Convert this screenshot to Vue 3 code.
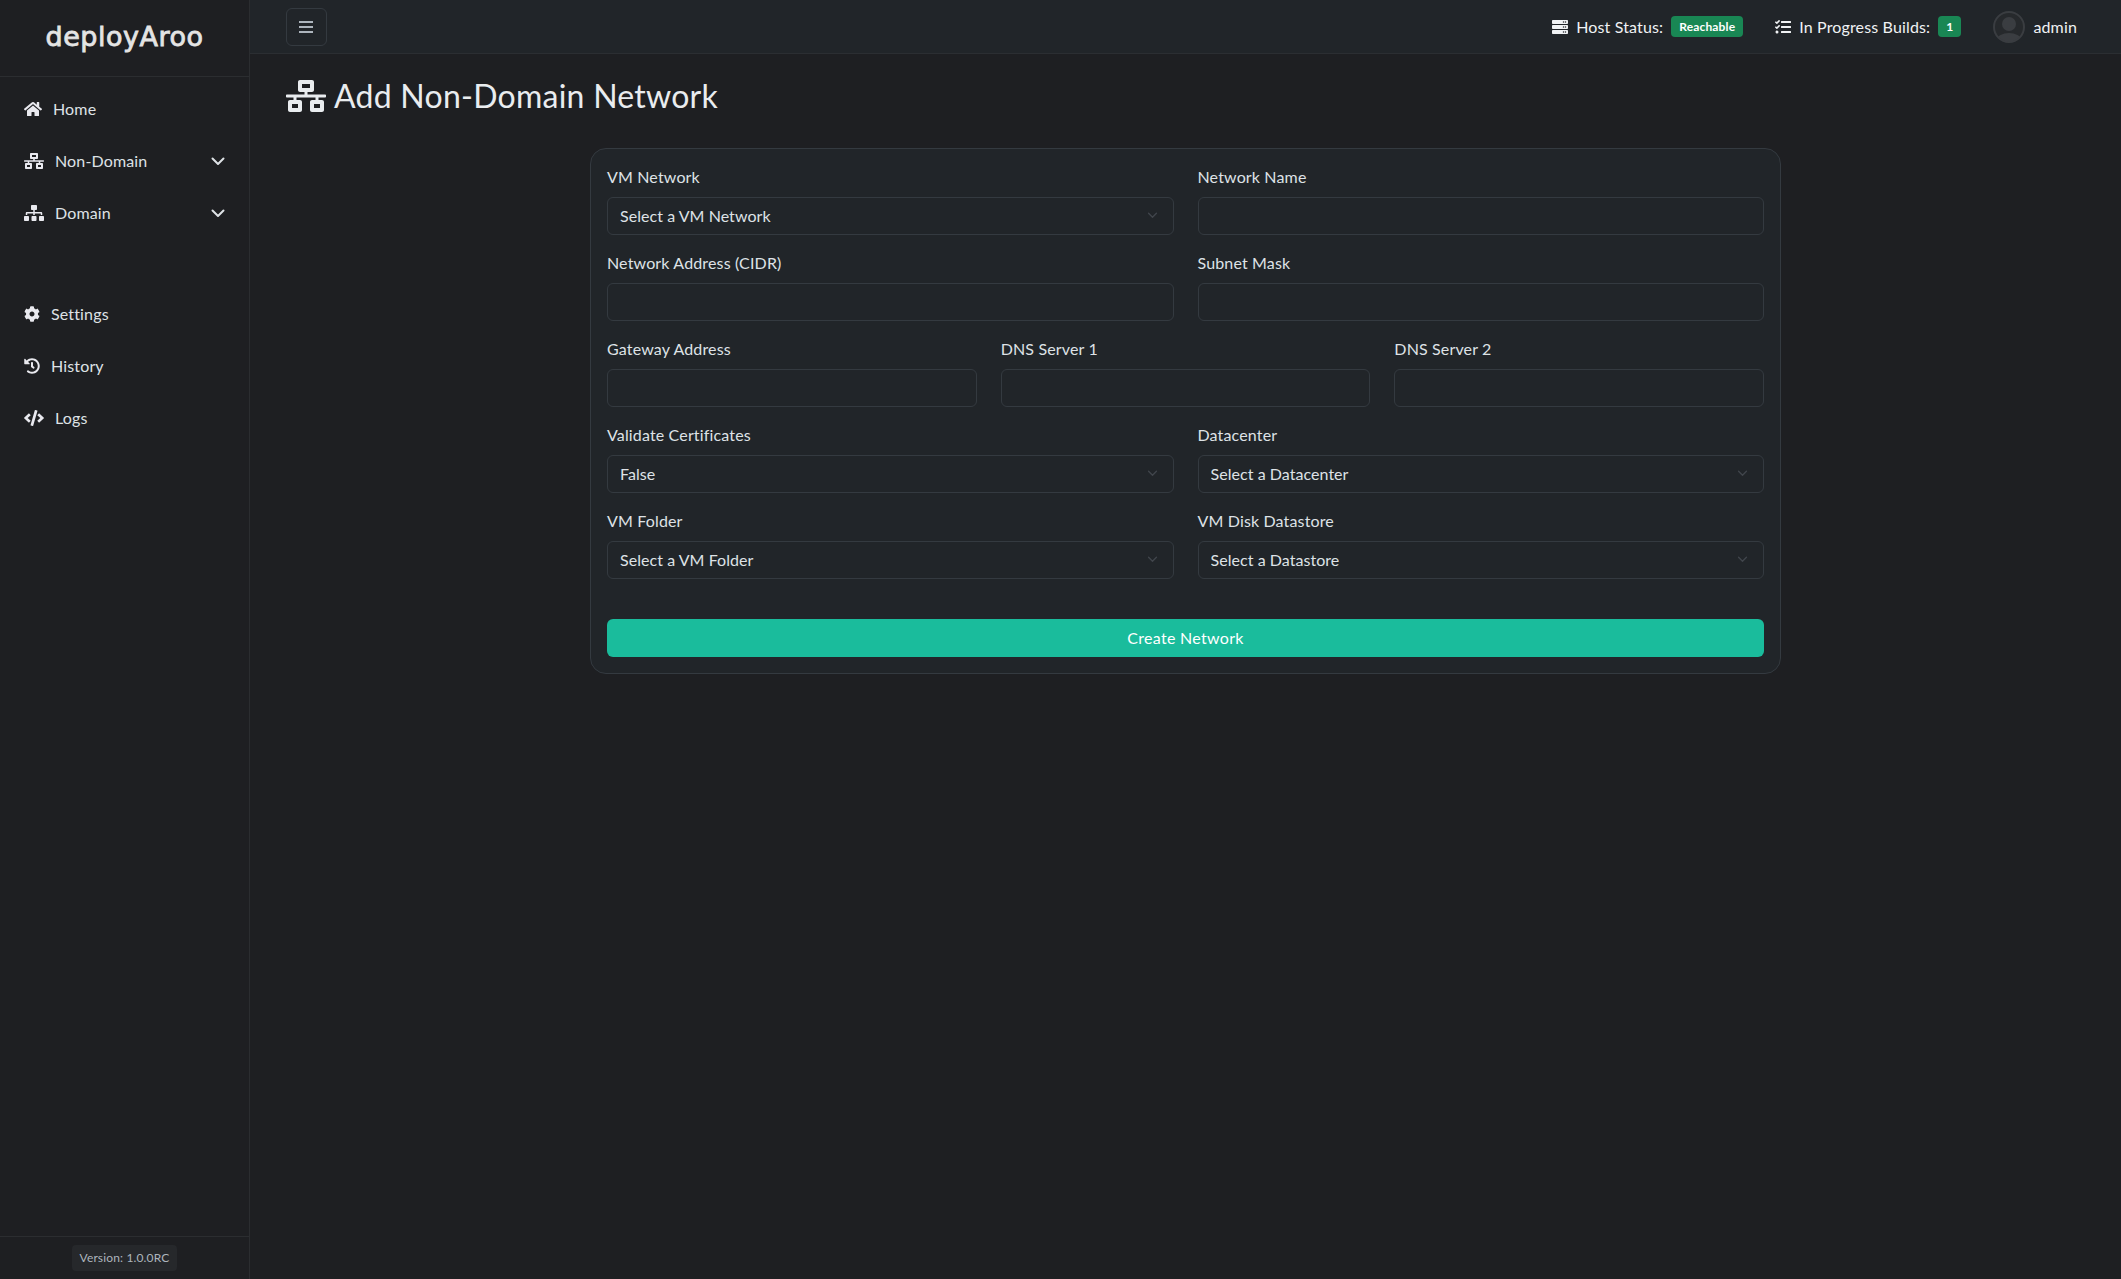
<template>
  <div class="layout">
    <aside class="sidebar">
      <div class="logo">deployAroo</div>
      <nav class="nav">
        <a v-for="item in topNav" :key="item.label" class="nav-item" href="#">
          <svg class="nav-icon" :viewBox="icons[item.icon].box" :width="icons[item.icon].w" height="16" fill="currentColor"><path :d="icons[item.icon].d" /></svg>
          <span>{{ item.label }}</span>
          <svg v-if="item.sub" class="nav-chevron" viewBox="0 0 14 9" width="14" height="9" fill="none" stroke="currentColor" stroke-width="2" stroke-linecap="round" stroke-linejoin="round"><path d="M1.5 1.5 7 7l5.5-5.5" /></svg>
        </a>
        <div class="nav-gap"></div>
        <a v-for="item in bottomNav" :key="item.label" class="nav-item" href="#">
          <svg class="nav-icon" :viewBox="icons[item.icon].box" :width="icons[item.icon].w" height="16" fill="currentColor"><path :d="icons[item.icon].d" /></svg>
          <span>{{ item.label }}</span>
        </a>
      </nav>
      <div class="side-foot">
        <span class="version">Version: 1.0.0RC</span>
      </div>
    </aside>

    <div class="content">
      <header class="topbar">
        <button class="menu-btn" type="button">
          <svg viewBox="0 0 14 12" width="14" height="12" fill="none" stroke="currentColor" stroke-width="2"><path d="M0 1h14M0 6h14M0 11h14" /></svg>
        </button>
        <div class="status">
          <svg class="status-icon" :viewBox="icons.server.box" width="16" height="16" fill="currentColor"><path :d="icons.server.d" /></svg>
          <span>Host Status:</span>
          <span class="badge">Reachable</span>
        </div>
        <div class="status builds">
          <svg class="status-icon" :viewBox="icons.tasks.box" width="16" height="16" fill="currentColor"><path :d="icons.tasks.d" /></svg>
          <span>In Progress Builds:</span>
          <span class="badge">1</span>
        </div>
        <div class="user">
          <svg class="avatar" viewBox="0 0 32 32" width="32" height="32">
            <defs><clipPath id="avatar-clip"><circle cx="16" cy="16" r="14.5" /></clipPath></defs>
            <circle cx="16" cy="16" r="15" fill="#26292c" stroke="#3a3d41" stroke-width="2" />
            <g clip-path="url(#avatar-clip)" fill="#3a3d41">
              <circle cx="16" cy="13" r="7" />
              <ellipse cx="16" cy="29" rx="12" ry="7" />
            </g>
          </svg>
          <span>admin</span>
        </div>
      </header>

      <main class="main">
        <h2 class="title">
          <svg :viewBox="icons.network.box" width="40" height="32" fill="currentColor"><path :d="icons.network.d" /></svg>
          <span>Add Non-Domain Network</span>
        </h2>

        <form class="card" @submit.prevent>
          <div v-for="(row, i) in rows" :key="i" class="form-row" :class="{ three: row.length === 3 }">
            <div v-for="field in row" :key="field.label" class="field">
              <label>{{ field.label }}</label>
              <div v-if="field.value" class="select-wrap">
                <select>
                  <option>{{ field.value }}</option>
                </select>
                <svg class="select-arrow" viewBox="0 0 12 8" width="11" height="7" fill="none" stroke="currentColor" stroke-width="1.5" stroke-linecap="round" stroke-linejoin="round"><path d="M1.5 1.5 6 6l4.5-4.5" /></svg>
              </div>
              <input v-else type="text" />
            </div>
          </div>
          <button class="submit" type="submit">Create Network</button>
        </form>
      </main>
    </div>
  </div>
</template>

<script setup>
// font awesome shapes, copied into here because nothing can be imported
const icons = {
  home: {
    box: '0 0 576 512',
    w: 18,
    d: 'M280.37 148.26L96 300.11V464a16 16 0 0 0 16 16l112.06-.29a16 16 0 0 0 15.92-16V368a16 16 0 0 1 16-16h64a16 16 0 0 1 16 16v95.64a16 16 0 0 0 16 16.05L464 480a16 16 0 0 0 16-16V300L295.67 148.26a12.19 12.19 0 0 0-15.3 0zM571.6 251.47L488 182.56V44.05a12 12 0 0 0-12-12h-56a12 12 0 0 0-12 12v72.61L318.47 43a48 48 0 0 0-61 0L4.34 251.47a12 12 0 0 0-1.6 16.9l25.5 31A12 12 0 0 0 45.15 301l235.22-193.74a12.19 12.19 0 0 1 15.3 0L530.9 301a12 12 0 0 0 16.9-1.6l25.5-31a12 12 0 0 0-1.7-16.93z',
  },
  network: {
    box: '0 0 640 512',
    w: 20,
    d: 'M640 264v-16c0-8.84-7.16-16-16-16H344v-40h72c17.67 0 32-14.33 32-32V32c0-17.67-14.33-32-32-32H224c-17.67 0-32 14.33-32 32v128c0 17.67 14.33 32 32 32h72v40H16c-8.84 0-16 7.16-16 16v16c0 8.84 7.16 16 16 16h104v40H64c-17.67 0-32 14.33-32 32v128c0 17.67 14.33 32 32 32h160c17.67 0 32-14.33 32-32V352c0-17.67-14.33-32-32-32h-56v-40h304v40h-56c-17.67 0-32 14.33-32 32v128c0 17.67 14.33 32 32 32h160c17.67 0 32-14.33 32-32V352c0-17.67-14.33-32-32-32h-56v-40h104c8.84 0 16-7.16 16-16zM256 128V64h128v64H256zm-64 320H96v-64h96v64zm352 0h-96v-64h96v64z',
  },
  sitemap: {
    box: '0 0 640 512',
    w: 20,
    d: 'M128 352H32c-17.67 0-32 14.33-32 32v96c0 17.67 14.33 32 32 32h96c17.67 0 32-14.33 32-32v-96c0-17.67-14.33-32-32-32zm-24-80h192v48h48v-48h192v48h48v-57.59c0-21.17-17.23-38.41-38.41-38.41H344v-64h40c17.67 0 32-14.33 32-32V32c0-17.67-14.33-32-32-32H256c-17.67 0-32 14.33-32 32v96c0 17.67 14.33 32 32 32h40v64H94.41C73.23 224 56 241.23 56 262.41V320h48v-48zm264 80h-96c-17.67 0-32 14.33-32 32v96c0 17.67 14.33 32 32 32h96c17.67 0 32-14.33 32-32v-96c0-17.67-14.33-32-32-32zm240 0h-96c-17.67 0-32 14.33-32 32v96c0 17.67 14.33 32 32 32h96c17.67 0 32-14.33 32-32v-96c0-17.67-14.33-32-32-32z',
  },
  cog: {
    box: '0 0 512 512',
    w: 16,
    d: 'M487.4 315.7l-42.6-24.6c4.3-23.2 4.3-47 0-70.2l42.6-24.6c4.9-2.8 7.1-8.6 5.5-14-11.1-35.6-30-67.8-54.7-94.6-3.8-4.1-10-5.1-14.8-2.3L380.8 110c-17.9-15.4-38.5-27.3-60.8-35.1V25.8c0-5.6-3.9-10.5-9.4-11.7-36.7-8.2-74.3-7.8-109.2 0-5.5 1.2-9.4 6.1-9.4 11.7V75c-22.2 7.9-42.8 19.8-60.8 35.1L88.7 85.5c-4.9-2.8-11-1.9-14.8 2.3-24.7 26.7-43.6 58.9-54.7 94.6-1.7 5.4.6 11.2 5.5 14L67.3 221c-4.3 23.2-4.3 47 0 70.2l-42.6 24.6c-4.9 2.8-7.1 8.6-5.5 14 11.1 35.6 30 67.8 54.7 94.6 3.8 4.1 10 5.1 14.8 2.3l42.6-24.6c17.9 15.4 38.5 27.3 60.8 35.1v49.2c0 5.6 3.9 10.5 9.4 11.7 36.7 8.2 74.3 7.8 109.2 0 5.5-1.2 9.4-6.1 9.4-11.7v-49.2c22.2-7.9 42.8-19.8 60.8-35.1l42.6 24.6c4.9 2.8 11 1.9 14.8-2.3 24.7-26.7 43.6-58.9 54.7-94.6 1.5-5.5-.7-11.3-5.6-14.1zM256 336c-44.1 0-80-35.9-80-80s35.9-80 80-80 80 35.9 80 80-35.9 80-80 80z',
  },
  history: {
    box: '0 0 512 512',
    w: 16,
    d: 'M504 255.531c.253 136.64-111.18 248.372-247.82 248.468-59.015.042-113.223-20.53-155.822-54.911-11.077-8.94-11.905-25.541-1.839-35.607l11.267-11.267c8.609-8.609 22.353-9.551 31.891-1.984C173.062 425.135 212.781 440 256 440c101.705 0 184-82.311 184-184 0-101.705-82.311-184-184-184-48.814 0-93.149 18.969-126.068 49.932l50.754 50.754c10.08 10.08 2.941 27.314-11.313 27.314H24c-8.837 0-16-7.163-16-16V38.627c0-14.254 17.234-21.393 27.314-11.314l49.372 49.372C129.209 34.136 189.552 8 256 8c136.81 0 247.747 110.78 248 247.531zm-180.912 78.784l9.823-12.63c8.138-10.463 6.253-25.542-4.21-33.679L288 256.349V152c0-13.255-10.745-24-24-24h-16c-13.255 0-24 10.745-24 24v135.651l65.409 50.874c10.463 8.137 25.541 6.253 33.679-4.21z',
  },
  code: {
    box: '0 0 640 512',
    w: 20,
    d: 'M278.9 511.5l-61-17.7c-6.4-1.8-10-8.5-8.2-14.9L346.2 8.7c1.8-6.4 8.5-10 14.9-8.2l61 17.7c6.4 1.8 10 8.5 8.2 14.9L293.8 503.3c-1.9 6.4-8.5 10.1-14.9 8.2zm-114-112.2l43.5-46.4c4.6-4.9 4.3-12.7-.8-17.2L117 256l90.6-79.7c5.1-4.5 5.5-12.3.8-17.2l-43.5-46.4c-4.5-4.8-12.1-5.1-17-.5L3.8 247.2c-5.1 4.7-5.1 12.8 0 17.5l144.1 135.1c4.9 4.6 12.5 4.4 17-.5zm327.2.6l144.1-135.1c5.1-4.7 5.1-12.8 0-17.5L492.1 112.1c-4.8-4.5-12.4-4.3-17 .5L431.6 159c-4.6 4.9-4.3 12.7.8 17.2L523 256l-90.6 79.7c-5.1 4.5-5.5 12.3-.8 17.2l43.5 46.4c4.5 4.9 12.1 5.1 17 .6z',
  },
  server: {
    box: '0 0 512 512',
    w: 16,
    d: 'M480 160H32c-17.673 0-32-14.327-32-32V64c0-17.673 14.327-32 32-32h448c17.673 0 32 14.327 32 32v64c0 17.673-14.327 32-32 32zm-48-88c-13.255 0-24 10.745-24 24s10.745 24 24 24 24-10.745 24-24-10.745-24-24-24zm-64 0c-13.255 0-24 10.745-24 24s10.745 24 24 24 24-10.745 24-24-10.745-24-24-24zm112 248H32c-17.673 0-32-14.327-32-32v-64c0-17.673 14.327-32 32-32h448c17.673 0 32 14.327 32 32v64c0 17.673-14.327 32-32 32zm-48-88c-13.255 0-24 10.745-24 24s10.745 24 24 24 24-10.745 24-24-10.745-24-24-24zm-64 0c-13.255 0-24 10.745-24 24s10.745 24 24 24 24-10.745 24-24-10.745-24-24-24zm112 248H32c-17.673 0-32-14.327-32-32v-64c0-17.673 14.327-32 32-32h448c17.673 0 32 14.327 32 32v64c0 17.673-14.327 32-32 32zm-48-88c-13.255 0-24 10.745-24 24s10.745 24 24 24 24-10.745 24-24-10.745-24-24-24zm-64 0c-13.255 0-24 10.745-24 24s10.745 24 24 24 24-10.745 24-24-10.745-24-24-24z',
  },
  tasks: {
    box: '0 0 512 512',
    w: 16,
    d: 'M139.61 35.5a12 12 0 0 0-17 0L58.93 98.81l-22.7-22.12a12 12 0 0 0-17 0L3.53 92.41a12 12 0 0 0 0 17l47.59 47.4a12.78 12.78 0 0 0 17.61 0l15.59-15.62L156.52 69a12.09 12.09 0 0 0 .09-17zm0 159.19a12 12 0 0 0-17 0l-63.68 63.72-22.7-22.1a12 12 0 0 0-17 0L3.53 252a12 12 0 0 0 0 17L51 316.5a12.77 12.77 0 0 0 17.6 0l15.7-15.69 72.2-72.22a12 12 0 0 0 .09-16.9zM64 368c-26.49 0-48.59 21.5-48.59 48S37.53 464 64 464a48 48 0 0 0 0-96zm432 16H208a16 16 0 0 0-16 16v32a16 16 0 0 0 16 16h288a16 16 0 0 0 16-16v-32a16 16 0 0 0-16-16zm0-320H208a16 16 0 0 0-16 16v32a16 16 0 0 0 16 16h288a16 16 0 0 0 16-16V80a16 16 0 0 0-16-16zm0 160H208a16 16 0 0 0-16 16v32a16 16 0 0 0 16 16h288a16 16 0 0 0 16-16v-32a16 16 0 0 0-16-16z',
  },
}

const topNav = [
  { label: 'Home', icon: 'home' },
  { label: 'Non-Domain', icon: 'network', sub: true },
  { label: 'Domain', icon: 'sitemap', sub: true },
]

const bottomNav = [
  { label: 'Settings', icon: 'cog' },
  { label: 'History', icon: 'history' },
  { label: 'Logs', icon: 'code' },
]

// a field with a value is a select, the rest are plain inputs
const rows = [
  [{ label: 'VM Network', value: 'Select a VM Network' }, { label: 'Network Name' }],
  [{ label: 'Network Address (CIDR)' }, { label: 'Subnet Mask' }],
  [{ label: 'Gateway Address' }, { label: 'DNS Server 1' }, { label: 'DNS Server 2' }],
  [{ label: 'Validate Certificates', value: 'False' }, { label: 'Datacenter', value: 'Select a Datacenter' }],
  [{ label: 'VM Folder', value: 'Select a VM Folder' }, { label: 'VM Disk Datastore', value: 'Select a Datastore' }],
]
</script>

<style scoped>
.layout {
  display: flex;
  min-height: 100vh;
  font-family: Lato, "Liberation Sans", sans-serif;
  font-size: 16px;
  line-height: 24px;
  letter-spacing: 0.15px;
  color: #dee2e6;
  background: #1e1f22;
}

.sidebar {
  width: 249px;
  flex-shrink: 0;
  display: flex;
  flex-direction: column;
  border-right: 1px solid #2b2d30;
}

.logo {
  height: 77px;
  box-sizing: border-box;
  border-bottom: 1px solid #2b2d30;
  padding-top: 21px;
  text-align: center;
  font-family: "DejaVu Sans", sans-serif;
  font-size: 27px;
  line-height: 32px;
  letter-spacing: 0.5px;
  color: #e4e4e4;
  -webkit-text-stroke: 0.8px #e4e4e4;
}

.nav {
  flex: 1;
  padding-top: 6px;
}

.nav-item {
  display: flex;
  align-items: center;
  height: 52px;
  padding: 0 24px;
  color: #dee2e6;
  text-decoration: none;
}

.nav-icon {
  margin-right: 11px;
  color: #e9e9ef;
  flex-shrink: 0;
}

.nav-chevron {
  margin-left: auto;
}

.nav-gap {
  height: 49px;
}

.side-foot {
  height: 43px;
  box-sizing: border-box;
  border-top: 1px solid #2b2d30;
  display: flex;
  justify-content: center;
  padding-top: 8px;
}

.version {
  height: 26px;
  padding: 0 8px;
  border-radius: 4px;
  background: #26282b;
  color: #adb5bd;
  font-size: 12px;
  line-height: 26px;
}

.content {
  flex: 1;
  min-width: 0;
}

.topbar {
  height: 54px;
  box-sizing: border-box;
  display: flex;
  align-items: center;
  padding: 0 44px 0 36px;
  background: #212529;
  border-bottom: 1px solid #2b2e32;
}

.menu-btn {
  width: 41px;
  height: 38px;
  margin-right: auto;
  padding: 0 1px 0 0;
  display: flex;
  align-items: center;
  justify-content: center;
  background: transparent;
  border: 1px solid #343a40;
  border-radius: 6px;
  color: #adb5bd;
}

.status {
  display: flex;
  align-items: center;
  color: #f0f2f4;
}

.builds {
  margin-left: 32px;
}

.status-icon {
  margin-right: 8px;
}

.badge {
  margin-left: 8px;
  padding: 0 8px;
  height: 21px;
  border-radius: 4px;
  background: #198754;
  color: #fff;
  font-size: 12px;
  font-weight: 700;
  line-height: 21px;
}

.user {
  display: flex;
  align-items: center;
  gap: 8px;
  margin-left: 32px;
  color: #f0f2f4;
}

.main {
  padding: 23px 36px 0;
}

.title {
  margin: 0 0 33px;
  display: flex;
  align-items: center;
  gap: 8px;
  font-size: 32px;
  font-weight: 400;
  line-height: 38px;
  letter-spacing: 0.25px;
  color: #e9ecef;
}

.card {
  width: 1191px;
  box-sizing: border-box;
  margin: 0 auto;
  padding: 16px;
  background: #212529;
  border: 1px solid #343a40;
  border-radius: 16px;
}

.form-row {
  display: grid;
  grid-template-columns: 1fr 1fr;
  gap: 24px;
  margin-bottom: 16px;
}

.form-row.three {
  grid-template-columns: 1fr 1fr 1fr;
}

.field label {
  display: block;
  margin-bottom: 8px;
}

.field input,
.field select {
  display: block;
  width: 100%;
  height: 38px;
  box-sizing: border-box;
  padding: 0 36px 0 12px;
  background: transparent;
  border: 1px solid #343a40;
  border-radius: 6px;
  color: #dee2e6;
  font: inherit;
  letter-spacing: 0.05px;
  appearance: none;
}

.select-wrap {
  position: relative;
}

.select-arrow {
  position: absolute;
  top: 15px;
  right: 16px;
  color: #41464c;
  pointer-events: none;
}

.submit {
  display: block;
  width: 100%;
  height: 38px;
  margin-top: 40px;
  background: #1abc9c;
  border: 0;
  border-radius: 6px;
  color: #fff;
  font: inherit;
  letter-spacing: 0.3px;
}
</style>

<style>
body {
  background: #1e1f22;
}
</style>
